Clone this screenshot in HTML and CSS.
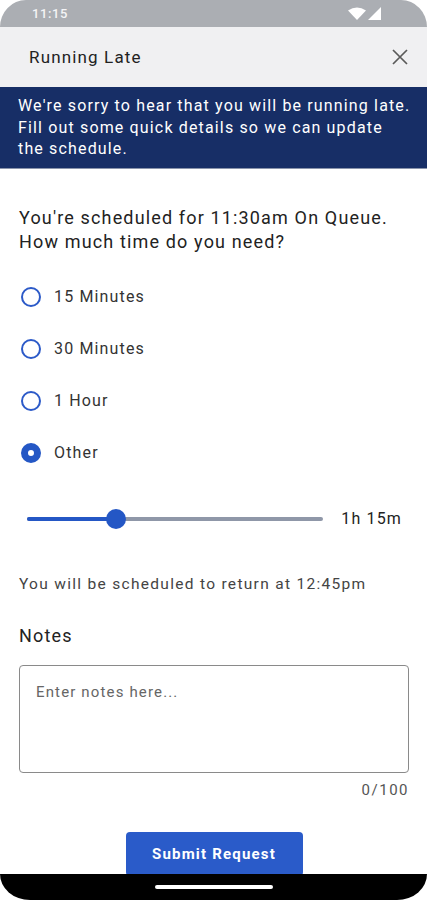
FILE: index.html
```html
<!DOCTYPE html>
<html lang="en">
<head>
  <meta charset="UTF-8" />
  <title>Running Late</title>
  <link rel="stylesheet" href="styles.css">
</head>
<body>
  <div class="phone">
    <div class="status-bar">
      <span class="clock">11:15</span>
      <span class="status-icons">
        <svg width="18" height="13" viewBox="0 0 18 13"><path d="M0 3.5 Q9 -2.5 18 3.5 L9 13 Z" fill="#fff"/></svg>
        <svg width="13" height="13" viewBox="0 0 13 13"><path d="M13 0 L13 13 L0 13 Z" fill="#fff"/></svg>
      </span>
    </div>

    <div class="app-bar">
      <span class="app-title">Running Late</span>
      <svg class="close" width="16" height="16" viewBox="0 0 16 16"><path d="M1 1 L15 15 M15 1 L1 15" stroke="#5a5a5a" stroke-width="1.7"/></svg>
    </div>

    <div class="banner">
      We're sorry to hear that you will be running late. Fill out some quick details so we can update the schedule.
    </div>

    <div class="content">
      <p class="question">You're scheduled for 11:30am On Queue.<br>How much time do you need?</p>

      <!-- Time options -->
      <div class="options">
        <label class="option"><span class="radio"></span>15 Minutes</label>
        <label class="option"><span class="radio"></span>30 Minutes</label>
        <label class="option"><span class="radio"></span>1 Hour</label>
        <label class="option"><span class="radio checked"></span>Other</label>
      </div>

      <div class="slider-row">
        <div class="slider">
          <div class="slider-fill" style="width: 30%"></div>
          <div class="slider-thumb" style="left: 30%"></div>
        </div>
        <span class="slider-value">1h 15m</span>
      </div>

      <p class="return-note">You will be scheduled to return at 12:45pm</p>

      <!-- Notes -->
      <p class="notes-label">Notes</p>
      <div class="notes-box">Enter notes here...</div>
      <p class="counter">0/100</p>

      <button class="submit">Submit Request</button>
    </div>

    <div class="nav-bar"><span class="home-bar"></span></div>
  </div>
</body>
</html>
```

FILE: styles.css
```css
body {
  margin: 0;
  background: white;
  font-family: Roboto, "Noto Sans", sans-serif;
  letter-spacing: 1.15px;
}
.phone {
  position: relative;
  width: 427px;
  height: 900px;
  overflow: hidden;
  background: white;
}
.status-bar {
  height: 27px;
  background: #abaeb3;
  border-radius: 26px 26px 0 0 / 27px 27px 0 0;
  display: flex;
  align-items: center;
  justify-content: space-between;
  padding: 0 46px 0 32px;
  color: #f4f4f6;
  font-size: 13px;
  font-weight: 500;
  letter-spacing: 0.6px;
}
.status-icons {
  display: flex;
  gap: 2px;
  align-items: center;
}
.app-bar {
  height: 60px;
  background: #f0f0f2;
  display: flex;
  align-items: center;
  justify-content: space-between;
  padding: 0 19px 0 29px;
}
.app-title {
  font-size: 17px;
  color: #222;
}
.banner {
  background: #172e66;
  color: white;
  font-size: 16px;
  line-height: 21.5px;
  padding: 8px 16px 8px 18px;
  border-bottom: 1px solid #8a94ab;
}
.content {
  padding: 0 18px 0 19px;
}
.question {
  margin: 37px 0 0;
  font-size: 18px;
  line-height: 24px;
  color: #222;
}
.options {
  margin-top: 17px;
}
.option {
  display: flex;
  align-items: center;
  height: 52px;
  font-size: 16px;
  color: #333;
  gap: 13px;
}
.radio {
  width: 16px;
  height: 16px;
  margin-left: 2px;
  border: 2px solid #2c5ac8;
  border-radius: 50%;
}
.radio.checked {
  width: 6px;
  height: 6px;
  border: 7px solid #2457c5;
}
.slider-row {
  display: flex;
  align-items: center;
  height: 40px;
  margin-top: 20px;
  padding: 0 7px 0 8px;
  gap: 18px;
}
.slider {
  position: relative;
  flex: 1;
  height: 4px;
  border-radius: 2px;
  background: #8f97a8;
}
.slider-fill {
  height: 100%;
  border-radius: 2px;
  background: #2457c5;
}
.slider-thumb {
  position: absolute;
  top: -8px;
  width: 20px;
  height: 20px;
  margin-left: -10px;
  border-radius: 50%;
  background: #2457c5;
}
.slider-value {
  font-size: 16px;
  color: #222;
}
.return-note {
  margin: 35px 0 0;
  font-size: 15.5px;
  line-height: 20px;
  color: #444;
  letter-spacing: 1.3px;
}
.notes-label {
  margin: 30px 0 0;
  font-size: 18px;
  line-height: 24px;
  color: #222;
}
.notes-box {
  margin-top: 17px;
  height: 108px;
  box-sizing: border-box;
  border: 1px solid #8a8a8a;
  border-radius: 4px;
  padding: 17px 16px;
  font-size: 15px;
  color: #666;
}
.counter {
  margin: 7px 0 0;
  text-align: right;
  font-size: 15px;
  line-height: 20px;
  color: #555;
  letter-spacing: 1.5px;
}
.submit {
  display: block;
  width: 177px;
  height: 44px;
  margin: 32px auto 0;
  background: #2a5bc9;
  color: white;
  border: none;
  border-radius: 4px;
  font-family: inherit;
  font-size: 15px;
  font-weight: bold;
  letter-spacing: 1.2px;
}
.nav-bar {
  position: absolute;
  left: 0;
  right: 0;
  bottom: 0;
  height: 26px;
  background: black;
  border-radius: 0 0 30px 30px / 0 0 26px 26px;
  display: flex;
  justify-content: center;
  padding-top: 11px;
  box-sizing: border-box;
}
.home-bar {
  width: 118px;
  height: 4px;
  border-radius: 2px;
  background: white;
}
```
